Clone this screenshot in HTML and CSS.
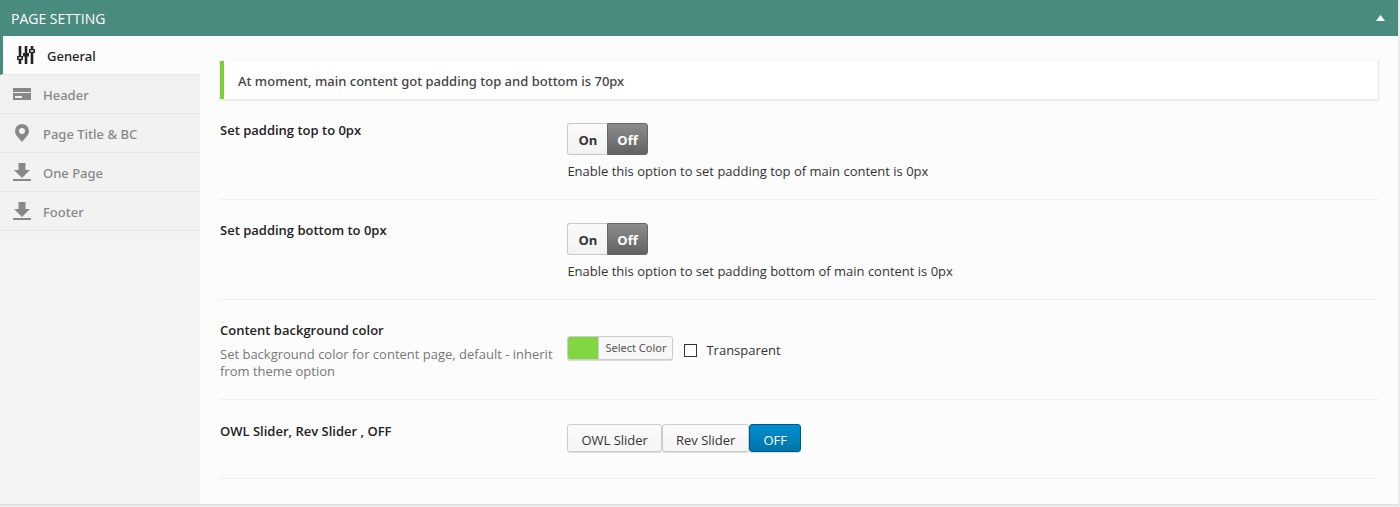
FILE: index.html
```html
<!DOCTYPE html>
<html lang="en">
<head>
<meta charset="utf-8">
<title>Page Setting</title>
<link rel="stylesheet" href="styles.css">
</head>
<body>
<section class="panel">
  <header class="panel-header">
    <h1 class="panel-title">PAGE SETTING</h1>
    <button class="panel-toggle" type="button" aria-label="Collapse panel">
      <svg width="9" height="6" viewBox="0 0 9 6"><path d="M4.5 0 9 6H0z" fill="currentColor"/></svg>
    </button>
  </header>
  <div class="panel-body">
    <nav class="tabs">
      <a class="tab tab-active" href="#general">
        <svg class="icon" viewBox="0 0 18 18"><path fill-rule="evenodd" d="M1.7 0h2.6v10H6v4H4.300v4H1.700v-4H0v-4h1.700zM1.500 11.300v1.400h3v-1.400zM7.700 0h2.600v7H12v3.500h-1.700V18H7.700v-7.500H6V7h1.700zM13.700 0h2.600v3H18v4h-1.700v11h-2.600V7H12V3h1.700zM13.500 4.300v1.400h3V4.300z"/></svg>
        General</a>
      <a class="tab" href="#header">
        <svg class="icon" viewBox="0 0 18 18"><path fill-rule="evenodd" d="M0 3h18v4H0zM0 8h18v7H0zM2 11v2h7v-2z"/></svg>
        Header</a>
      <a class="tab" href="#page-title">
        <svg class="icon" viewBox="0 0 18 18"><path fill-rule="evenodd" d="M9 0a7 7 0 0 1 7 7c0 4-4 7-7 11C6 14 2 11 2 7a7 7 0 0 1 7-7zm0 4a3 3 0 1 0 0 6 3 3 0 0 0 0-6z"/></svg>
        Page Title &amp; BC</a>
      <a class="tab" href="#one-page">
        <svg class="icon" viewBox="0 0 18 18"><path d="M5.500 0h7v7H17l-8 8-8-8h4.500zM0 16h18v2H0z"/></svg>
        One Page</a>
      <a class="tab" href="#footer">
        <svg class="icon" viewBox="0 0 18 18"><path d="M5.500 0h7v7H17l-8 8-8-8h4.500zM0 16h18v2H0z"/></svg>
        Footer</a>
    </nav>
    <main class="content">
      <p class="notice">At moment, main content got padding top and bottom is 70px</p>
      <div class="field">
        <h2 class="field-title">Set padding top to 0px</h2>
        <div class="field-control">
          <div class="switch">
            <button class="switch-option" type="button">On</button><button class="switch-option switch-selected" type="button" aria-pressed="true">Off</button>
          </div>
          <p class="hint">Enable this option to set padding top of main content is 0px</p>
        </div>
      </div>
      <div class="field">
        <h2 class="field-title">Set padding bottom to 0px</h2>
        <div class="field-control">
          <div class="switch">
            <button class="switch-option" type="button">On</button><button class="switch-option switch-selected" type="button" aria-pressed="true">Off</button>
          </div>
          <p class="hint">Enable this option to set padding bottom of main content is 0px</p>
        </div>
      </div>
      <div class="field">
        <div class="field-label">
          <h2 class="field-title">Content background color</h2>
          <p class="field-description">Set background color for content page, default - inherit from theme option</p>
        </div>
        <div class="field-control color-control">
          <button class="color-button" type="button"><span class="swatch"></span><span class="color-text">Select Color</span></button>
          <label class="check-label"><input class="check" type="checkbox">Transparent</label>
        </div>
      </div>
      <div class="field field-last">
        <h2 class="field-title">OWL Slider, Rev Slider , OFF</h2>
        <div class="field-control button-set">
          <button class="set-option" type="button">OWL Slider</button>
          <button class="set-option" type="button">Rev Slider</button>
          <button class="set-option set-selected" type="button" aria-pressed="true">OFF</button>
        </div>
      </div>
    </main>
  </div>
</section>
</body>
</html>
```
FILE: styles.css
```css
* { box-sizing: border-box; }
body {
  margin: 0;
  padding: 0 2px 3px 0;
  background: #ececec;
  color: #333;
  font: 13px/18px "Open Sans", "Noto Sans", sans-serif;
}
h1, h2, p { margin: 0; }
button, input { font: inherit; color: inherit; }
.panel { background: #fcfcfc; box-shadow: 0 1px 1px #ddd; }
.panel-header {
  display: flex;
  align-items: center;
  justify-content: space-between;
  height: 36px;
  padding: 2px 13px 0 11px;
  background: #4a8b7f;
  color: #fff;
}
.panel-title { font-size: 14px; font-weight: 400; }
.panel-toggle {
  display: flex;
  margin-bottom: 2px;
  padding: 0;
  border: 0;
  background: none;
  color: #fff;
}
.panel-body { display: flex; }
.tabs {
  flex: 0 0 200px;
  background: linear-gradient(#f1f1f1, #f4f4f4);
}
.tab {
  display: flex;
  align-items: center;
  gap: 12px;
  height: 39px;
  padding: 1px 13px 0;
  border-bottom: 1px solid #e7e7e7;
  color: #888;
  font-family: "Noto Sans", sans-serif;
  font-weight: 500;
  text-decoration: none;
}
.tab-active {
  padding-left: 14px;
  border-left: 3px solid #4a8b7f;
  background: #fcfcfc;
  color: #222;
}
.icon { width: 18px; height: 18px; margin-top: -1px; fill: currentColor; }
.content { flex: 1; padding: 25px 20px; }
.notice {
  height: 38px;
  padding: 11px 14px 0;
  border-left: 4px solid #7ad03a;
  background: #fff;
  box-shadow: 0 1px 1px 1px #ececec;
  color: #444;
  font-family: "Noto Sans", sans-serif;
  font-weight: 500;
}
.field {
  display: grid;
  grid-template-columns: 30% 1fr;
  min-height: 100px;
  padding: 23px 0 17px;
  border-bottom: 1px solid #f0f0f0;
}
.notice + .field { min-height: 101px; padding-top: 24px; }
.field-last { min-height: 79px; padding-top: 24px; }
.field-title { font-size: 13px; font-weight: 600; line-height: 14px; color: #222; }
.field-description { margin-top: 9px; line-height: 17px; color: #777; }
.switch { display: flex; }
.switch-option {
  height: 32px;
  padding: 2px 10px 0;
  border: 1px solid #c8c8c8;
  border-right: 0;
  border-radius: 3px 0 0 3px;
  background: linear-gradient(#fafafa, #f2f2f2);
  font-weight: 700;
}
.switch-selected {
  padding: 2px 9px 0;
  border: 1px solid #666;
  border-radius: 0 3px 3px 0;
  background: linear-gradient(#8c8c8c, #626262);
  color: #fff;
}
.hint { margin-top: 7px; }
.color-control { display: flex; align-items: flex-start; gap: 11px; padding-top: 13px; }
.color-button {
  display: flex;
  height: 24px;
  padding: 0;
  overflow: hidden;
  border: 1px solid #ccc;
  border-radius: 3px;
  background: #f7f7f7;
  box-shadow: 0 1px 0 #ddd;
}
.swatch { width: 30px; height: 22px; background: #81d742; }
.color-text {
  padding: 0 6px;
  border-left: 1px solid #ccc;
  color: #555;
  font-family: "Noto Sans", sans-serif;
  font-size: 11px;
  line-height: 22px;
}
.check-label { display: flex; align-items: center; gap: 9px; padding-top: 5px; }
.check {
  width: 13px;
  height: 13px;
  margin: 0;
  appearance: none;
  border: 1px solid #333;
  background: #fff;
}
.check:checked { background: #333; }
.button-set { display: flex; align-items: flex-start; }
.set-option {
  height: 28px;
  padding: 3px 13px 0;
  border: 1px solid #ccc;
  border-radius: 3px;
  background: linear-gradient(#fafafa, #f5f5f5);
  box-shadow: 0 1px 0 #ddd;
}
.set-selected {
  border-color: #005684;
  background: linear-gradient(#0090d0, #0073aa);
  color: #fff;
}
```
